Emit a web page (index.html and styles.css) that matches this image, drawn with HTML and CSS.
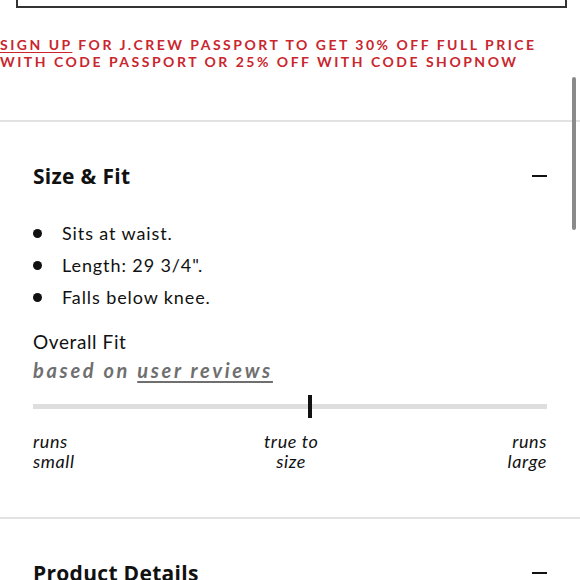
FILE: index.html
```html
<!DOCTYPE html>
<html>
<head>
<meta charset="utf-8">
<link rel="stylesheet" href="styles.css">
</head>
<body>
<div class="page">
  <div class="promo-box"></div>
  <p class="promo"><a class="promo-link">SIGN UP</a> FOR J.CREW PASSPORT TO GET 30% OFF FULL PRICE<br>WITH CODE PASSPORT OR 25% OFF WITH CODE SHOPNOW</p>

  <section class="panel">
    <div class="panel-head">
      <h2 class="panel-title">Size &amp; Fit</h2>
      <span class="minus"></span>
    </div>
    <ul class="bullets">
      <li>Sits at waist.</li>
      <li>Length: 29 3/4".</li>
      <li>Falls below knee.</li>
    </ul>
    <div class="fit">
      <div class="fit-title">Overall Fit</div>
      <div class="fit-sub">based on <a class="fit-link">user reviews</a></div>
      <div class="track">
        <span class="tick" style="left: 53.9%"></span>
      </div>
      <div class="labels">
        <span class="lbl lbl-left">runs<br>small</span>
        <span class="lbl lbl-mid">true to<br>size</span>
        <span class="lbl lbl-right">runs<br>large</span>
      </div>
    </div>
  </section>

  <section class="panel">
    <div class="panel-head">
      <h2 class="panel-title">Product Details</h2>
      <span class="minus"></span>
    </div>
  </section>
</div>
<div class="scrollbar"></div>
</body>
</html>
```

FILE: styles.css
```css
html, body {
  margin: 0;
  padding: 0;
  background: #fff;
  overflow: hidden;
  height: 580px;
}
body {
  font-family: "Lato", "Open Sans", sans-serif;
  color: #111;
  position: relative;
}
.page {
  display: flex;
  flex-direction: column;
}
.promo-box {
  margin: -40px 13px 0 16px;
  height: 44px;
  border: 2px solid #333;
}
.promo {
  margin: 28px 0 0 0;
  font-family: "Lato", sans-serif;
  font-weight: 700;
  font-size: 14px;
  line-height: 17px;
  letter-spacing: 2.5px;
  color: #c9262e;
}
.promo-link {
  text-decoration: underline;
  text-underline-offset: 2px;
}
.panel {
  border-top: 2px solid #e2e2e2;
  padding: 0 33px;
}
.panel:first-of-type {
  margin-top: 50px;
}
.panel-head {
  display: flex;
  align-items: center;
  justify-content: space-between;
  padding-top: 40px;
}
.panel-title {
  margin: 0;
  font-family: "Open Sans", sans-serif;
  font-weight: 700;
  font-size: 21px;
  line-height: 28px;
  letter-spacing: 0.3px;
  color: #111;
}
.minus {
  width: 15px;
  height: 2px;
  background: #111;
}
.bullets {
  list-style: none;
  margin: 27px 0 0 0;
  padding: 0;
}
.bullets li {
  display: flex;
  align-items: center;
  font-size: 18px;
  line-height: 32px;
  letter-spacing: 0.9px;
  color: #111;
}
.bullets li::before {
  content: "";
  width: 9px;
  height: 9px;
  border-radius: 50%;
  background: #111;
  margin: 0 20px 0 0;
  flex-shrink: 0;
}
.fit {
  padding: 15px 0 46px;
}
.fit-title {
  font-size: 19px;
  line-height: 28px;
  letter-spacing: 0.6px;
  color: #111;
}
.fit-sub {
  font-size: 20px;
  line-height: 28px;
  font-weight: 700;
  font-style: italic;
  letter-spacing: 2.7px;
  color: #6f6f6f;
}
.fit-link {
  text-decoration: underline;
  text-underline-offset: 3px;
}
.track {
  position: relative;
  height: 5px;
  background: #dedede;
  margin-top: 20px;
}
.tick {
  position: absolute;
  top: -9px;
  width: 4px;
  height: 23px;
  background: #111;
  margin-left: -2px;
}
.labels {
  display: flex;
  justify-content: space-between;
  margin-top: 22px;
}
.lbl {
  font-size: 18px;
  line-height: 20px;
  font-style: italic;
  letter-spacing: 0.6px;
  color: #111;
}
.lbl-mid { text-align: center; }
.lbl-right { text-align: right; }
.scrollbar {
  position: absolute;
  top: 77px;
  left: 572px;
  width: 4px;
  height: 153px;
  border-radius: 2px;
  background: #8a8a8a;
}
```
